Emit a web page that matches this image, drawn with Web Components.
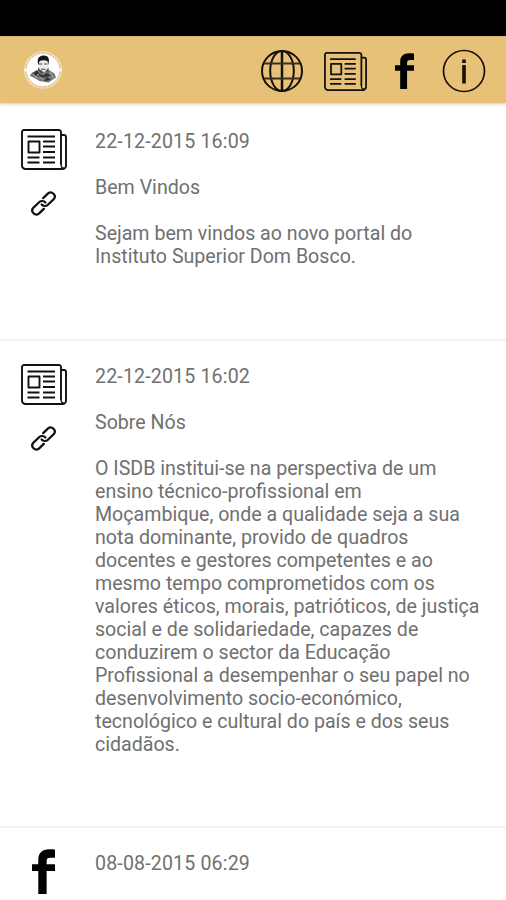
<!DOCTYPE html>
<html lang="pt">
<head>
<meta charset="utf-8">
<title>ISDB</title>
<style>
html,body{margin:0;padding:0;background:#fff;height:900px;overflow:hidden}
</style>
</head>
<body>
<news-app></news-app>
<script>
const ICONS = {
  globe: ['0 0 44 44', `<g fill="none" stroke="#15100a" stroke-width="2"><circle cx="22" cy="22" r="20"/><ellipse cx="22" cy="22" rx="11.8" ry="20"/><path stroke-width="2.500" d="M22 2v40"/><path stroke="#3a2f1c" d="M4 14.500h36M4 29.500h36"/></g>`],
  news: ['0 0 46 41', `<g fill="none" stroke="#111" stroke-width="1.900" stroke-linejoin="round" stroke-linecap="round"><path d="M40 35V3a2 2 0 0 0-2-2H3a2 2 0 0 0-2 2v33.500a3.500 3.500 0 0 0 3.500 3.500h37a3.500 3.500 0 0 0 3.500-3.500V8a2 2 0 0 0-2-2H40.500"/><path stroke-width="1.200" d="M40 33v3q0 3 3 3"/><rect x="7.500" y="12.500" width="11" height="11"/><path stroke-linecap="butt" d="M6.500 7.500h27.500M22 12.500h12M22 17.500h12M22 23h12M6.500 28.500h12M22 28.500h12M6.500 33.500h12M22 33.500h12"/></g>`],
  facebook: ['0 0 22 44', `<path fill="#000" d="M22 .7v7.800h-4.500c-2.600 0-3.500 1-3.500 3.300V15h8v6.600h-8V44H6V21.600H0V15h6v-4.200C6 3.800 9.800.300 16.500.300 19 .300 21 .400 22 .700z"/>`],
  info: ['0 0 44 44', `<circle cx="22" cy="22" r="20.500" fill="none" stroke="#15100a" stroke-width="1.700"/><path fill="#15100a" d="M20.200 10.500h3.600v3.500h-3.600zM20.200 16h3.600v18.500h-3.600z"/>`],
  link: ['0 0 26 27', `<g fill="none" stroke="#111" stroke-width="2.200" stroke-linecap="round"><path d="M12.700 8.100L17.400 3.400A4 4 0 0 1 23 9L17 15A4 4 0 0 1 11.200 14.500"/><path d="M13.300 18.900L8.600 23.600A4 4 0 0 1 3 18L9 12A4 4 0 0 1 14.800 12.500"/></g>`]
};

class AppIcon extends HTMLElement {
  connectedCallback() {
    const [box, art] = ICONS[this.getAttribute('name')];
    this.attachShadow({mode: 'open'}).innerHTML = `
      <style>:host{display:block;flex:none}svg{display:block;width:100%;height:100%}</style>
      <svg viewBox="${box}" preserveAspectRatio="none" aria-hidden="true">${art}</svg>`;
  }
}
customElements.define('app-icon', AppIcon);

class SchoolLogo extends HTMLElement {
  connectedCallback() {
    this.attachShadow({mode: 'open'}).innerHTML = `
      <style>:host{display:block;width:40px;height:40px}svg{display:block}</style>
      <svg width="40" height="40" viewBox="0 0 40 40" aria-hidden="true">
        <circle cx="20" cy="20" r="18.800" fill="#f6e3bc"/>
        <circle cx="20" cy="20" r="17" fill="none" stroke="#b99a5c" stroke-width=".9" stroke-dasharray="1.500 1"/>
        <circle cx="20" cy="20" r="16.300" fill="#fff"/>
        <path fill="#fdf6e6" d="M1 18.500h3v3H1zM36 18.500h3v3h-3z"/>
        <path fill="#777" d="M15 20l-5.500 2.200-3 3.500 4 1.800 6 3.500 9 1.500 7.500-5-1.500-4-6.500-4z"/>
        <path fill="#333" d="M14 20l2 3.500 4 2 4-2.500 4 2.500-6 2-8-1-4-3zM24 27l4 3-7 1z"/>
        <path fill="#ececec" d="M15.500 11q5-3 9.500 0l.5 6.500-4.500 5-5-4z"/>
        <path fill="#161616" d="M15 15.500l-.3-5.500q1-4.200 5.800-4.400 5 0 5.500 4.400l-.6 5-1-4q-4-1.500-7.700 0z"/>
        <path fill="#444" d="M16 13.500h3.300v1.100H16zM21.200 13.500h3.200v1.100h-3.200zM18 18.700h4.500v1.100H18zM15.500 17l1.500 3 3 2-1 2-4-4zM25.500 17l-2 4 2 1.500z"/>
        <path stroke="#c6c6c6" stroke-width=".6" d="M10 24l6 5M14 24l6 6M27 22l3 6M12 28l4-4"/>
      </svg>`;
  }
}
customElements.define('school-logo', SchoolLogo);

class TopBar extends HTMLElement {
  connectedCallback() {
    this.attachShadow({mode: 'open'}).innerHTML = `
      <style>
        :host{display:flex;align-items:center;height:67px;box-sizing:border-box;padding:2px 20px 0 23px;background:#e8c179;border-top:1px solid #d8b570;box-shadow:0 1px 3px rgba(0,0,0,.22)}
        school-logo{margin-right:auto;margin-top:-2px}
        nav{display:flex;align-items:center}
        .globe{width:44px;height:44px;margin-right:20px}
        .news{width:43px;height:39px;margin-right:28px}
        .fb{width:19px;height:36px;margin-right:28px}
        .info{width:44px;height:44px}
      </style>
      <school-logo></school-logo>
      <nav>
        <app-icon class="globe" name="globe"></app-icon>
        <app-icon class="news" name="news"></app-icon>
        <app-icon class="fb" name="facebook"></app-icon>
        <app-icon class="info" name="info"></app-icon>
      </nav>`;
  }
}
customElements.define('top-bar', TopBar);

class NewsItem extends HTMLElement {
  connectedCallback() {
    const fb = this.getAttribute('kind') === 'facebook';
    this.attachShadow({mode: 'open'}).innerHTML = `
      <style>
        :host{display:grid;grid-template-columns:95px 1fr;box-sizing:border-box;padding:24px 0 70px;border-bottom:2px solid #f3f3f3}
        :host(:first-child){padding-bottom:71px}
        .side{display:flex;flex-direction:column;align-items:center;width:45px;margin-left:21px;gap:20px}
        .news{width:46px;height:41px;margin-top:-1px}
        .link{width:27px;height:27px}
        .fb{width:23px;height:45px;margin-top:-3px}
        .body{font:19.600px/23px Roboto,sans-serif;color:#707070}
        .date{letter-spacing:.15px}
        .title{margin:23px 0}
        .body ::slotted(*){display:block}
      </style>
      <div class="side">${fb ? '<app-icon class="fb" name="facebook"></app-icon>' : '<app-icon class="news" name="news"></app-icon><app-icon class="link" name="link"></app-icon>'}</div>
      <div class="body">
        <div class="date"><slot name="date"></slot></div>
        <div class="title"><slot name="title"></slot></div>
        <div><slot></slot></div>
      </div>`;
  }
}
customElements.define('news-item', NewsItem);

class NewsApp extends HTMLElement {
  connectedCallback() {
    this.attachShadow({mode: 'open'}).innerHTML = `
      <style>
        :host{display:block;height:900px;overflow:hidden;background:#fff}
        .status{height:36px;background:#000}
        main{padding-top:3px}
      </style>
      <div class="status"></div>
      <top-bar></top-bar>
      <main>
        <news-item>
          <span slot="date">22-12-2015 16:09</span>
          <span slot="title">Bem Vindos</span>
          <span>Sejam bem vindos ao novo portal do<br>Instituto Superior Dom Bosco.</span>
        </news-item>
        <news-item>
          <span slot="date">22-12-2015 16:02</span>
          <span slot="title">Sobre Nós</span>
          <span>O ISDB institui-se na perspectiva de um<br>ensino técnico-profissional em<br>Moçambique, onde a qualidade seja a sua<br>nota dominante, provido de quadros<br>docentes e gestores competentes e ao<br>mesmo tempo comprometidos com os<br>valores éticos, morais, patrióticos, de justiça<br>social e de solidariedade, capazes de<br>conduzirem o sector da Educação<br>Profissional a desempenhar o seu papel no<br>desenvolvimento socio-económico,<br>tecnológico e cultural do país e dos seus<br>cidadãos.</span>
        </news-item>
        <news-item kind="facebook">
          <span slot="date">08-08-2015 06:29</span>
        </news-item>
      </main>`;
  }
}
customElements.define('news-app', NewsApp);
</script>
</body>
</html>
